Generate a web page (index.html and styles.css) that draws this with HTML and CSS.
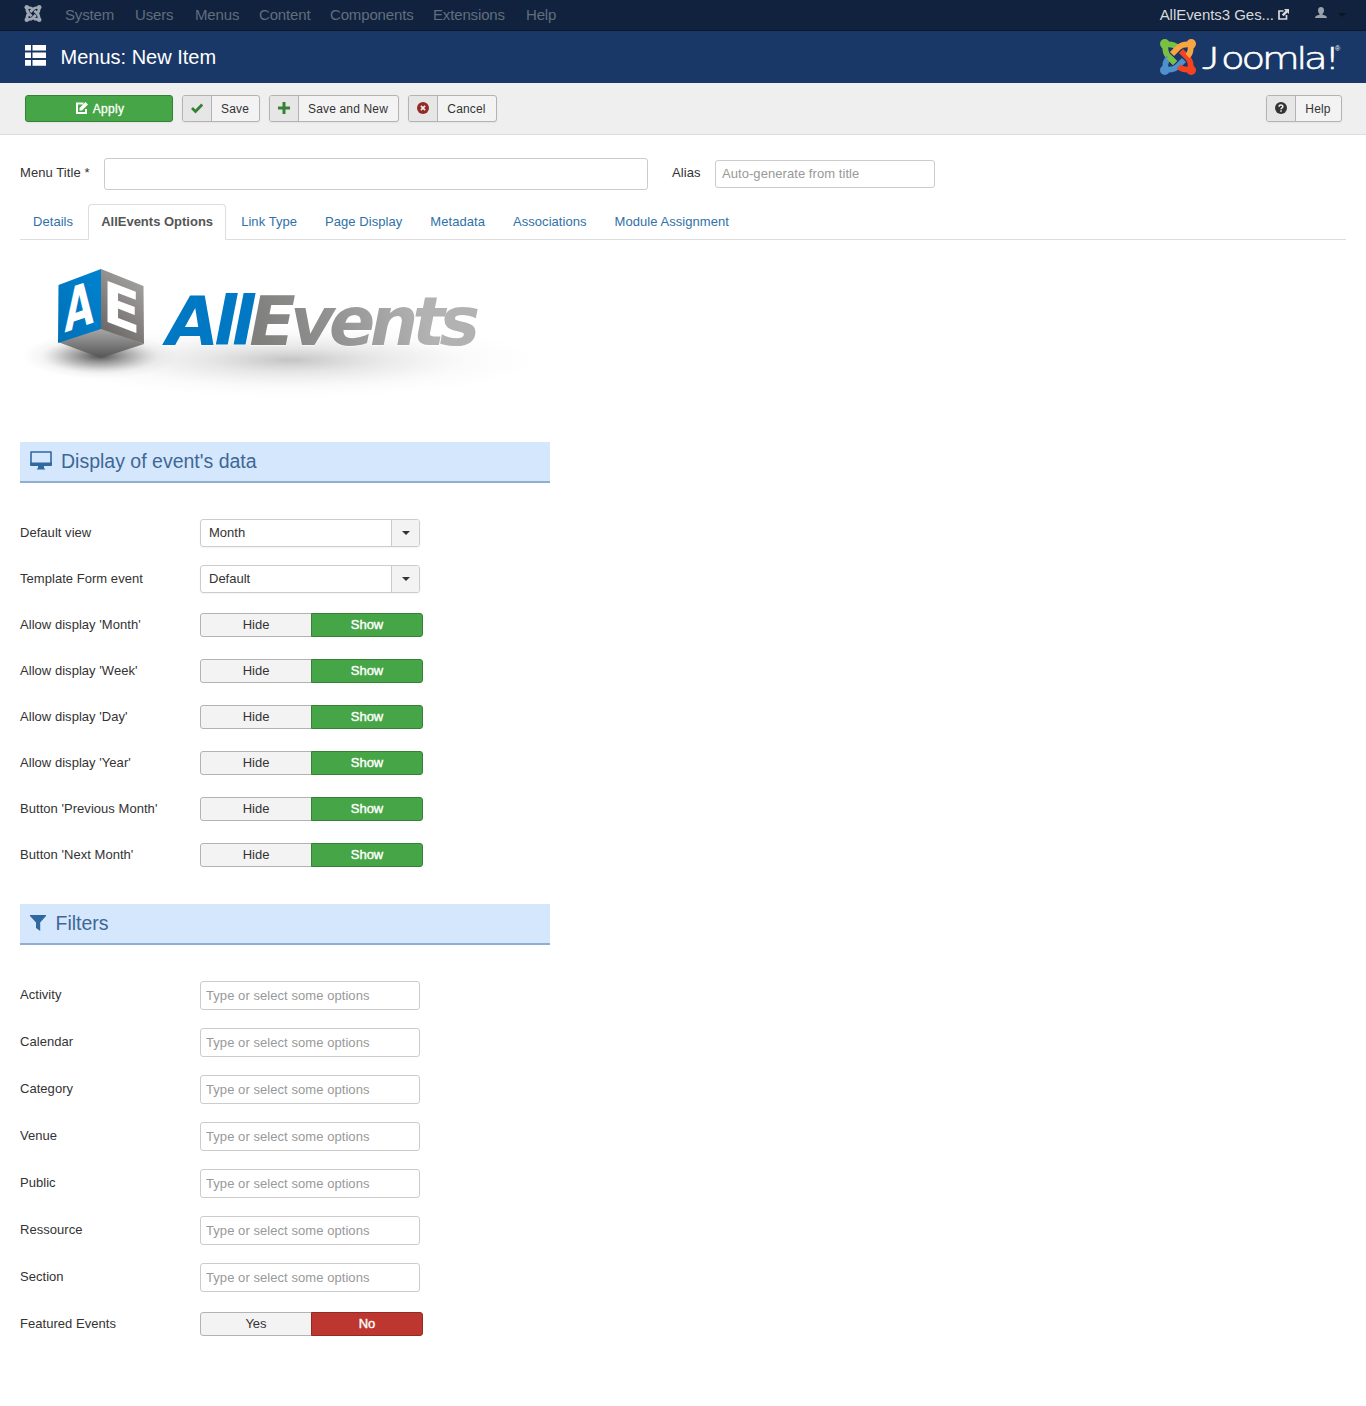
FILE: index.html
```html
<!DOCTYPE html>
<html lang="en">
<head>
<meta charset="utf-8">
<title>Menus: New Item</title>
<link rel="stylesheet" href="styles.css">
</head>
<body>
<svg width="0" height="0" class="defs" aria-hidden="true">
  <defs>
    <g id="arm">
      <circle cx="-13.2" cy="-13.2" r="4.8" stroke="none"/>
      <path d="M-12.500-12.500Q-13.500-4.500-9.500-.5L-3 6M-12.500-12.500Q-4.500-13.500-.8-9.500" fill="none" stroke-width="5.800"/>
    </g>
    <g id="caret"><path d="M0 0h8L4 4z"/></g>
  </defs>
</svg>
<nav class="topbar">
  <svg class="brand" viewBox="-18 -18 36 36"><g fill="#a0a8b4" stroke="#a0a8b4"><use href="#arm"/><use href="#arm" transform="rotate(90)"/><use href="#arm" transform="rotate(180)"/><use href="#arm" transform="rotate(270)"/></g></svg>
  <div class="menu"><span>System</span><span>Users</span><span>Menus</span><span>Content</span><span>Components</span><span>Extensions</span><span>Help</span></div>
  <span class="site">AllEvents3 Ges...</span>
  <svg class="ext" viewBox="0 0 11 11"><path d="M5.500 2H1v8h7.500V6" fill="none" stroke="#d9d9d9" stroke-width="1.700"/><path d="M6 0h5v5L9.400 3.600 5.600 7.300 3.800 5.500 7.500 1.700z" fill="#d9d9d9"/></svg>
  <svg class="user" viewBox="0 0 12 12"><path d="M6 0C8 0 9 1.300 9 3.400c0 1.600-.7 2.700-1.500 3.500v.8c2.500.5 4.500 1.200 4.500 3.300H0c0-2.100 2-2.800 4.500-3.300v-.8C3.700 6.100 3 5 3 3.400 3 1.300 4 0 6 0z" fill="#9aa1ad"/></svg>
  <svg class="user-caret" viewBox="0 0 8 4"><use href="#caret" fill="#0a1526"/></svg>
</nav>
<header class="header">
  <svg class="list" viewBox="0 0 21 21" fill="#fff"><path d="M0 0h6v5.500H0zM7.500 0H21v5.500H7.500zM0 7.500h6V13H0zM7.500 7.500H21V13H7.500zM0 15h6v5.700H0zM7.500 15H21v5.700H7.500z"/></svg>
  <h1>Menus: New Item</h1>
  <svg class="joomla" viewBox="0 0 184 40">
    <g transform="translate(20 20)">
      <use href="#arm" fill="#7ac143" stroke="#7ac143"/>
      <use href="#arm" fill="#5091cd" stroke="#5091cd" transform="rotate(270)"/>
      <use href="#arm" fill="#f44321" stroke="#f44321" transform="rotate(180)"/>
      <use href="#arm" fill="#f9a541" stroke="#f9a541" transform="rotate(90)"/>
      <path d="M-9.500-.5L-3 6" stroke="#7ac143" stroke-width="5.800"/>
    </g>
    <text class="wordmark" transform="translate(0 31.500) scale(1.250 1)"><tspan class="initial" x="35.500">J</tspan><tspan x="50.500">oomla!</tspan></text>
    <text class="reg" x="177" y="14">®</text>
  </svg>
</header>
<div class="toolbar">
  <button class="btn apply"><svg viewBox="0 0 12 12"><path d="M7.500 1.500H1v9.500h9V7" fill="none" stroke="#fff" stroke-width="2"/><path d="M3.500 8.500V6L9.500 0 12 2.500l-6 6z" fill="#fff"/></svg><b>Apply</b></button>
  <button class="btn save"><i><svg viewBox="0 0 12 12"><path d="M1 6l3.500 3.500L11.200 2.500" fill="none" stroke="#378137" stroke-width="2.800"/></svg></i><b>Save</b></button>
  <button class="btn savenew"><i><svg viewBox="0 0 12 12"><path d="M6 0v12M0 6h12" stroke="#378137" stroke-width="3"/></svg></i><b>Save and New</b></button>
  <button class="btn cancel"><i><svg viewBox="0 0 12 12"><circle cx="6" cy="6" r="6" fill="#942a25"/><path d="M3.900 3.900l4.200 4.200M8.100 3.900L3.900 8.100" stroke="#eee" stroke-width="1.600"/></svg></i><b>Cancel</b></button>
  <button class="btn help"><i><svg viewBox="0 0 12 12"><circle cx="6" cy="6" r="6" fill="#333"/><path d="M4.100 4.700C4.100 2.600 7.900 2.600 7.900 4.600 7.900 5.800 6 5.900 6 7.200M6 8.200v1.500" fill="none" stroke="#eee" stroke-width="1.500"/></svg></i><b>Help</b></button>
</div>
<main class="content">
  <div class="titles">
    <label>Menu Title <small>*</small></label><input class="title-input">
    <label class="alias">Alias</label><input class="alias-input" placeholder="Auto-generate from title">
  </div>
  <div class="tabs"><a>Details</a><a class="active">AllEvents Options</a><a>Link Type</a><a>Page Display</a><a>Metadata</a><a>Associations</a><a>Module Assignment</a></div>
  <svg class="logo" viewBox="20 240 530 202">
    <defs>
      <radialGradient id="s1"><stop offset="0" stop-color="#333" stop-opacity=".85"/><stop offset=".45" stop-color="#666" stop-opacity=".42"/><stop offset=".75" stop-color="#999" stop-opacity=".1"/><stop offset="1" stop-color="#aaa" stop-opacity="0"/></radialGradient>
      <radialGradient id="s2"><stop offset="0" stop-color="#888" stop-opacity=".5"/><stop offset=".35" stop-color="#aaa" stop-opacity=".27"/><stop offset=".7" stop-color="#bbb" stop-opacity=".07"/><stop offset="1" stop-color="#ccc" stop-opacity="0"/></radialGradient>
      <linearGradient id="left" x1="0" y1="1" x2="1" y2="0"><stop stop-color="#0070b8"/><stop offset="1" stop-color="#0083d0"/></linearGradient>
      <linearGradient id="right" x1="0" y1="1" x2=".5" y2="0"><stop stop-color="#625e5c"/><stop offset="1" stop-color="#a09e9d"/></linearGradient>
      <linearGradient id="under" x1="0" y1="0" x2="0" y2="1"><stop stop-color="#aaa"/><stop offset="1" stop-color="#555"/></linearGradient>
      <linearGradient id="grey" gradientUnits="userSpaceOnUse" x1="95" y1="0" x2="250" y2="-50"><stop stop-color="#7f7f7d"/><stop offset=".45" stop-color="#929292"/><stop offset="1" stop-color="#b2b2b2"/></linearGradient>
    </defs>
    <ellipse cx="290" cy="360" rx="250" ry="38" fill="url(#s2)"/>
    <ellipse cx="100" cy="356" rx="78" ry="23" fill="url(#s1)"/>
    <path d="M58 342l43-14 43 16-43 14z" fill="url(#under)"/>
    <path d="M58.500 285L101 269v60l-43 14z" fill="url(#left)"/>
    <path d="M101 269l42.500 17 .5 58-43-15z" fill="url(#right)"/>
    <text class="face" transform="matrix(1.020 -.35 0 1.600 64.500 332.500)">A</text>
    <text class="face" transform="matrix(1.500 .58 0 1.520 102.500 320)">E</text>
    <text class="word" transform="translate(166.500 344.500)"><tspan fill="#0078c4">All</tspan><tspan fill="url(#grey)">Events</tspan></text>
  </svg>
  <section>
    <h2><svg class="monitor" viewBox="0 0 22 19"><path d="M1 1h20v12.500H1z" fill="none" stroke="#3068a0" stroke-width="1.600" stroke-linejoin="round"/><path d="M0 11.500h22v2.500q0 1-1 1h-7v2l1.500 1.500h-9L8 17v-2H1q-1 0-1-1z" fill="#3068a0"/></svg><span>Display of event's data</span></h2>
    <div class="rows">
      <div class="row"><label>Default view</label><div class="select"><span>Month</span><i><svg viewBox="0 0 8 4"><use href="#caret" fill="#333"/></svg></i></div></div>
      <div class="row"><label>Template Form event</label><div class="select"><span>Default</span><i><svg viewBox="0 0 8 4"><use href="#caret" fill="#333"/></svg></i></div></div>
      <div class="row"><label>Allow display 'Month'</label><div class="radio"><span>Hide</span><span class="on">Show</span></div></div>
      <div class="row"><label>Allow display 'Week'</label><div class="radio"><span>Hide</span><span class="on">Show</span></div></div>
      <div class="row"><label>Allow display 'Day'</label><div class="radio"><span>Hide</span><span class="on">Show</span></div></div>
      <div class="row"><label>Allow display 'Year'</label><div class="radio"><span>Hide</span><span class="on">Show</span></div></div>
      <div class="row"><label>Button 'Previous Month'</label><div class="radio"><span>Hide</span><span class="on">Show</span></div></div>
      <div class="row"><label>Button 'Next Month'</label><div class="radio"><span>Hide</span><span class="on">Show</span></div></div>
    </div>
  </section>
  <section>
    <h2><svg class="funnel" viewBox="0 0 16 16"><path d="M0 0h16v1L10.200 7.500V16L6 13V7.500L0 1z" fill="#3068a0"/></svg><span>Filters</span></h2>
    <div class="rows filters">
      <div class="row"><label>Activity</label><input placeholder="Type or select some options"></div>
      <div class="row"><label>Calendar</label><input placeholder="Type or select some options"></div>
      <div class="row"><label>Category</label><input placeholder="Type or select some options"></div>
      <div class="row"><label>Venue</label><input placeholder="Type or select some options"></div>
      <div class="row"><label>Public</label><input placeholder="Type or select some options"></div>
      <div class="row"><label>Ressource</label><input placeholder="Type or select some options"></div>
      <div class="row"><label>Section</label><input placeholder="Type or select some options"></div>
      <div class="row"><label>Featured Events</label><div class="radio"><span>Yes</span><span class="off">No</span></div></div>
    </div>
  </section>
</main>
</body>
</html>
```
FILE: styles.css
```css
* { box-sizing: border-box; }
body { margin: 0; min-height: 1406px; background: #fff; color: #333; font: 13px/18px "Liberation Sans", Arial, sans-serif; }
svg { display: block; flex: none; }
.defs { position: absolute; }
input, button { font: inherit; color: inherit; margin: 0; }

.topbar { display: flex; align-items: center; height: 31px; padding: 0 20px 1px 24px; background: #10223e; border-bottom: 1px solid #0b182b; font-size: 15px; }
.brand { width: 18px; height: 17px; margin: 0 23px 2px 0; }
.menu { display: grid; grid-template-columns: 70px 60px 64px 71px 103px 93px 40px; color: #626d7e; letter-spacing: -.15px; margin-right: auto; }
.site { color: #d9d9d9; letter-spacing: -.04px; }
.ext { width: 11px; height: 11px; margin: 0 26px 0 4px; }
.user { width: 12px; height: 12px; margin: 0 11px 3px 0; }
.user-caret { width: 8px; height: 4px; }

.header { display: flex; align-items: center; height: 52px; padding: 0 24px 0 25px; background: #1a3867; color: #fff; }
.list { width: 21px; height: 21px; margin: -3px 14.5px 0 0; }
.header h1 { margin: 0 auto 0 0; font-size: 20px; font-weight: 400; line-height: 52px; }
.joomla { width: 184px; height: 40px; }
.wordmark { font: 200 31px "DejaVu Sans", sans-serif; letter-spacing: -2.6px; fill: #fff; stroke: #fff; stroke-width: .6px; }
.wordmark .initial { font: 300 32px Lato, sans-serif; }
.reg { font-size: 7px; fill: #fff; }

.toolbar { display: flex; gap: 9px; height: 52px; padding: 12px 24px 0 25px; background: #efefef; border-bottom: 1px solid #dcdcdc; }
.btn { display: flex; height: 27px; padding: 0; border: 1px solid #b3b3b3; border-radius: 3px; background: #f3f3f3; font-size: 12px; line-height: 25px; letter-spacing: .17px; box-shadow: 0 1px 2px rgba(0,0,0,.05); overflow: hidden; }
.btn i { display: flex; align-items: center; justify-content: center; width: 29px; height: 25px; padding-bottom: 1px; background: #e6e6e6; border-right: 1px solid #b3b3b3; }
.btn b { flex: 1; padding-top: 1px; font-weight: 400; text-align: center; line-height: 25px; }
.btn svg { width: 12px; height: 12px; }
.save b, .savenew b, .cancel b, .help b { margin-left: -1px; }
.btn.apply { width: 148px; justify-content: center; align-items: center; gap: 5px; padding-left: 2px; background: #46a546; border-color: #378137; color: #fff; }
.apply svg { margin-top: -1px; }
.apply b { flex: none; letter-spacing: .3px; -webkit-text-stroke: .3px #fff; }
.save { width: 78px; }
.savenew { width: 130px; }
.cancel { width: 89px; }
.help { width: 76px; margin-left: auto; }

.content { padding: 0 20px; }
.titles { display: flex; align-items: center; height: 69px; padding-top: 9px; }
.titles label { width: 84px; margin-top: -3px; letter-spacing: .08px; }
.titles small { font-size: 13px; }
input { height: 28px; padding: 0 6px; border: 1px solid #ccc; border-radius: 3px; background: #fff; }
input::placeholder { color: #999; opacity: 1; letter-spacing: .06px; }
.title-input { width: 544px; height: 32px; }
.titles .alias { width: 43px; margin-left: 24px; }
.titles .alias-input { width: 220px; padding-bottom: 2px; }

.tabs { display: flex; gap: 2px; height: 36px; border-bottom: 1px solid #ddd; }
.tabs a { height: 36px; padding: 8px 12px; border: 1px solid transparent; color: #3071a9; white-space: nowrap; letter-spacing: .055px; }
.tabs .active { width: 138px; background: #fff; border-color: #ddd #ddd #fff; border-radius: 4px 4px 0 0; color: #555; font-weight: 700; letter-spacing: 0; }

.logo { width: 530px; height: 202px; }
.face { font: 700 37px "DejaVu Sans", sans-serif; fill: #fff; }
.word { font: italic 700 68px "DejaVu Sans", sans-serif; letter-spacing: -5.5px; stroke: #fff; stroke-width: 1px; paint-order: stroke; }

h2 { display: flex; align-items: center; width: 530px; height: 41px; margin: 0; padding: 0 10px 3px; background: #d5e7fc; border-bottom: 2px solid #90afd0; color: #3e6796; font-size: 19.5px; font-weight: 400; }
h2 span { padding-top: 2px; }
.monitor { width: 22px; height: 19px; margin-right: 9px; }
.funnel { width: 16px; height: 16px; margin: 2px 9.5px 0 0; }
.rows { display: grid; grid-auto-rows: 28px; gap: 18px; padding: 36px 0 35px; }
.row { display: flex; align-items: center; }
.row label { width: 180px; margin-top: -1px; letter-spacing: .04px; }
.filters { grid-auto-rows: 29px; }
.filters .row { align-items: flex-start; }
.filters label { margin-top: 5px; }
.filters input { width: 220px; height: 29px; padding: 0 5px; }
.filters .radio { margin-top: 2px; }
.select { display: flex; width: 220px; height: 28px; border: 1px solid #ccc; border-radius: 3px; overflow: hidden; box-shadow: 0 1px 2px rgba(0,0,0,.05); }
.select span { flex: 1; padding-left: 8px; line-height: 26px; }
.select i { display: flex; align-items: center; justify-content: center; width: 28px; padding-bottom: 1px; background: #f3f3f3; border-left: 1px solid #ccc; }
.select svg { width: 8px; height: 4px; }
.radio { display: flex; width: 223px; height: 24px; }
.radio span { width: 112px; border: 1px solid #b3b3b3; border-radius: 3px 0 0 3px; background: #f3f3f3; line-height: 21px; text-align: center; }
.radio span + span { margin-left: -1px; border-radius: 0 3px 3px 0; color: #fff; -webkit-text-stroke: .4px #fff; }
.radio .on { background: #46a546; border-color: #378137; }
.radio .off { background: #bd362f; border-color: #942a25; }
```
